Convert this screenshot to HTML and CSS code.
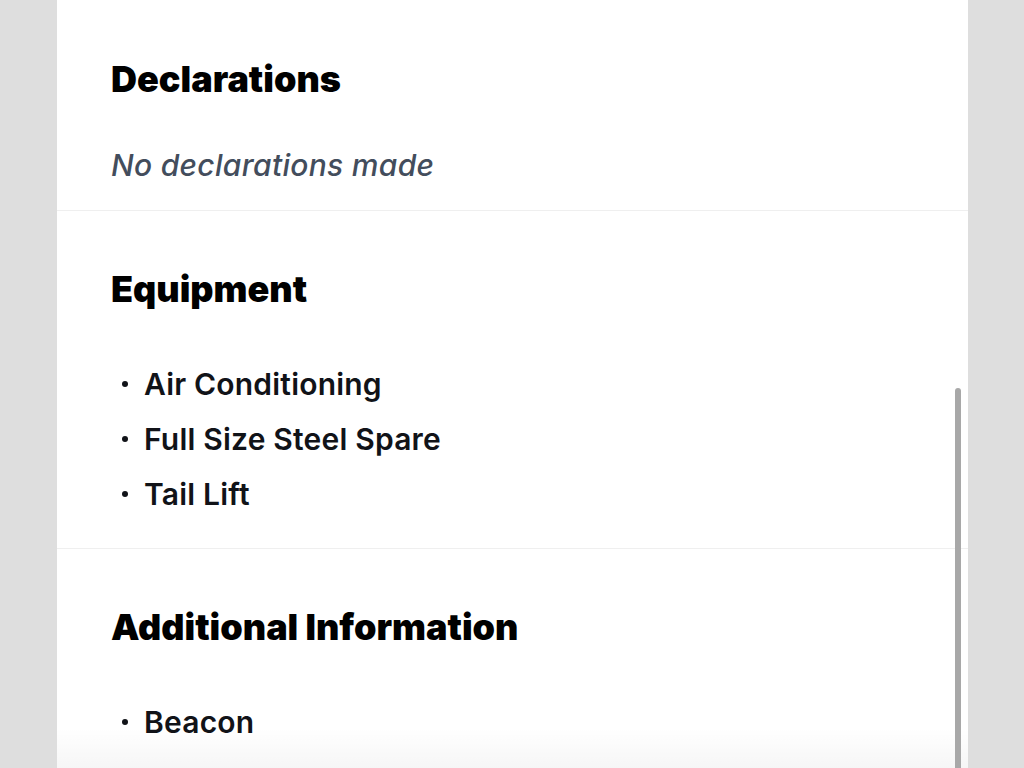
FILE: index.html
```html
<!DOCTYPE html>
<html lang="en">
<head>
<meta charset="utf-8">
<title>Details</title>
<link rel="stylesheet" href="styles.css">
</head>
<body>
<main class="panel">
  <section class="section section-first">
    <h2 class="section-title">Declarations</h2>
    <p class="empty-note">No declarations made</p>
  </section>
  <section class="section">
    <h2 class="section-title">Equipment</h2>
    <ul class="item-list">
      <li>Air Conditioning</li>
      <li>Full Size Steel Spare</li>
      <li>Tail Lift</li>
    </ul>
  </section>
  <section class="section">
    <h2 class="section-title">Additional Information</h2>
    <ul class="item-list">
      <li>Beacon</li>
    </ul>
  </section>
  <div class="bottom-fade"></div>
  <div class="scroll-thumb"></div>
</main>
</body>
</html>
```

FILE: styles.css
```css
html, body {
  margin: 0;
  padding: 0;
  height: 100%;
}
body {
  background: #dedede;
  font-family: Inter, "Noto Sans", sans-serif;
  overflow: hidden;
}
.panel {
  position: relative;
  margin-left: 57px;
  width: 911px;
  height: 768px;
  background: #ffffff;
  overflow: hidden;
}
.section {
  padding: 56px 54px 26px;
  border-top: 1px solid #efefef;
}
.section-first {
  border-top: none;
  padding-top: 57px;
  padding-bottom: 27px;
}
.section-title {
  margin: 0;
  font-size: 36px;
  line-height: 44px;
  font-weight: 900;
  color: #000;
  letter-spacing: 0;
}
.empty-note {
  margin: 46px 0 0;
  font-size: 30px;
  line-height: 36px;
  font-style: italic;
  font-weight: 500;
  color: #434d5c;
  letter-spacing: 0.3px;
}
.item-list {
  list-style: none;
  margin: 46px 0 0;
  padding: 0;
}
.item-list li {
  position: relative;
  padding-left: 33px;
  font-size: 30px;
  line-height: 55px;
  font-weight: 600;
  color: #111318;
  letter-spacing: 0.2px;
}
.item-list li::before {
  content: "";
  position: absolute;
  left: 11px;
  top: 24px;
  width: 6px;
  height: 6px;
  border-radius: 50%;
  background: #111318;
}
.bottom-fade {
  position: absolute;
  left: 0;
  right: 0;
  bottom: 0;
  height: 40px;
  background: linear-gradient(to bottom, rgba(0,0,0,0), rgba(0,0,0,0.035));
}
.scroll-thumb {
  position: absolute;
  left: 898px;
  top: 388px;
  width: 6px;
  height: 400px;
  border-radius: 3px;
  background: #a8a8a8;
}
```
